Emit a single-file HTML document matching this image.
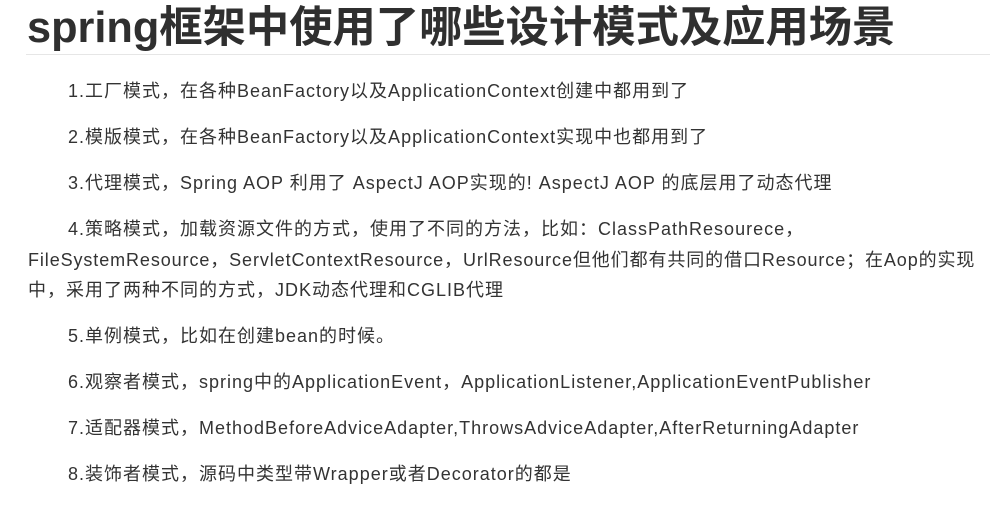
<!DOCTYPE html>
<html><head><meta charset="utf-8"><style>
html,body{margin:0;padding:0;background:#fff;width:996px;height:498px;overflow:hidden}
body{font-family:"Liberation Sans","Noto Sans CJK SC",sans-serif;color:#333}
h1{position:absolute;left:27px;top:-4px;margin:0;font-size:43.3px;font-weight:bold;line-height:64px;white-space:nowrap;color:#2f2f2f}
.hr{position:absolute;left:26px;top:54px;width:964px;height:1px;background:#e6e6e6}
.c{position:absolute;left:28px;top:76px;width:980px;font-size:18px;line-height:30.5px;letter-spacing:1px}
p{margin:0 0 15.5px 0;white-space:nowrap}
.i{padding-left:40px}
</style></head><body>
<h1>spring框架中使用了哪些设计模式及应用场景</h1>
<div class="hr"></div>
<div class="c">
<p class="i">1.工厂模式，在各种BeanFactory以及ApplicationContext创建中都用到了</p>
<p class="i">2.模版模式，在各种BeanFactory以及ApplicationContext实现中也都用到了</p>
<p class="i">3.代理模式，Spring AOP 利用了 AspectJ AOP实现的! AspectJ AOP 的底层用了动态代理</p>
<p><span class="i" style="display:block">4.策略模式，加载资源文件的方式，使用了不同的方法，比如：ClassPathResourece，</span><span style="display:block;letter-spacing:0.9px">FileSystemResource，ServletContextResource，UrlResource但他们都有共同的借口Resource；在Aop的实现</span><span style="display:block">中，采用了两种不同的方式，JDK动态代理和CGLIB代理</span></p>
<p class="i">5.单例模式，比如在创建bean的时候。</p>
<p class="i">6.观察者模式，spring中的ApplicationEvent，ApplicationListener,ApplicationEventPublisher</p>
<p class="i">7.适配器模式，MethodBeforeAdviceAdapter,ThrowsAdviceAdapter,AfterReturningAdapter</p>
<p class="i">8.装饰者模式，源码中类型带Wrapper或者Decorator的都是</p>
</div>
</body></html>
